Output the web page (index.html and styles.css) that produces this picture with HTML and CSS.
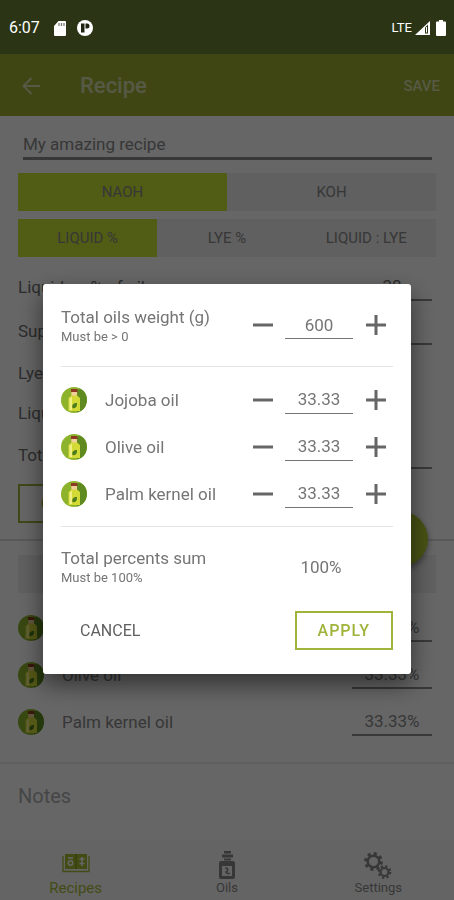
FILE: index.html
```html
<!DOCTYPE html>
<html lang="en">
<head>
<meta charset="utf-8">
<meta name="viewport" content="width=device-width, initial-scale=1">
<title>Recipe</title>
<link rel="stylesheet" href="styles.css">
</head>
<body>
<svg class="defs" aria-hidden="true">
  <symbol id="oil" viewBox="0 0 26 26">
    <circle cx="13" cy="13" r="13" fill="#8db32c"/>
    <path d="M16 3 19 1.500A13 13 0 0 1 16 25.600Z" fill="#5e8a20"/>
    <path d="M10.500 5h5.500v3.500l3 2.500v13H7.500V11l3-2.500z" fill="#d3d935"/>
    <path d="M10.500 5h5.500v3.500h-5.500z" fill="#f0cf9a"/>
    <path d="M10 2h6.500v3H10z" fill="#8c3a22"/>
    <path d="M8.500 11.500 11 9.500V23H8.500z" fill="#f1ee83"/>
    <path d="M11.500 21c-1-3.500 1-5 4.500-5 .3 3.500-1.500 6-4.500 5z" fill="#4d7c1c"/>
  </symbol>
  <symbol id="minus" viewBox="0 0 20 20"><path d="M0 10h20" stroke="#666" stroke-width="3"/></symbol>
  <symbol id="plus" viewBox="0 0 20 20"><path d="M0 10h20M10 0v20" stroke="#666" stroke-width="3"/></symbol>
</svg>

<header class="status">
  <span class="clock">6:07</span>
  <svg class="sd" width="12" height="15" viewBox="0 0 12 15"><path d="M4.500 0H11q1 0 1 1v13q0 1-1 1H1q-1 0-1-1V5z" fill="#fff"/><path d="M5 2v3M7.500 2v3M10 2v3" stroke="#777f6c" stroke-width="1.300"/></svg>
  <svg class="badge" width="16" height="16" viewBox="0 0 16 16"><circle cx="8" cy="8" r="8" fill="#fff"/><path d="M4 3.500h3.500v9H4z" fill="#1d2510"/><path d="M8.500 3.500h1.500a2.500 2.500 0 0 1 0 5H8.500z" fill="#1d2510"/></svg>
  <span class="lte">LTE</span>
  <svg width="15" height="14" viewBox="0 0 15 14"><path d="M15 0v14H0z" fill="#fff"/><path d="M10 6.500v6h3v-9z" fill="#2b3516"/><path d="M11.500 6v5.500" stroke="#fff" stroke-width="1"/></svg>
  <svg class="battery" width="10" height="16" viewBox="0 0 10 16"><path d="M3 0h4v1.500h2q1 0 1 1V15q0 1-1 1H1q-1 0-1-1V2.500q0-1 1-1h2z" fill="#fff"/></svg>
</header>

<div class="toolbar">
  <button class="back" aria-label="Back"><svg width="18" height="18" viewBox="0 0 18 18"><path d="M18 9H1.500M9.500 1 1.500 9l8 8" fill="none" stroke="currentColor" stroke-width="2"/></svg></button>
  <h1>Recipe</h1>
  <button class="save">SAVE</button>
</div>

<main>
  <section class="form">
    <input class="name" type="text" value="My amazing recipe" aria-label="Recipe name">
    <div class="toggle"><button class="on">NAOH</button><button>KOH</button></div>
    <div class="toggle"><button class="on">LIQUID %</button><button>LYE %</button><button>LIQUID : LYE</button></div>
    <div class="fields">
      <div class="field entry"><label for="liq">Liquid as % of oils</label><input id="liq" value="38"></div>
      <div class="field entry"><label for="fat">Superfat %</label><input id="fat" value="5"></div>
      <div class="field"><span>Lye</span><b>80.7</b></div>
      <div class="field"><span>Liquid</span><b>228</b></div>
      <div class="field entry"><label for="tot">Total</label><input id="tot" value="600"></div>
    </div>
    <button class="outline calc">CALCULATE</button>
    <button class="fab" aria-label="Add oil"></button>
  </section>

  <section class="oils">
    <button class="wide">OILS</button>
    <div class="oil"><svg class="bottle"><use href="#oil"/></svg><label for="b1">Jojoba oil</label><input id="b1" value="33.33%"></div>
    <div class="oil"><svg class="bottle"><use href="#oil"/></svg><label for="b2">Olive oil</label><input id="b2" value="33.33%"></div>
    <div class="oil"><svg class="bottle"><use href="#oil"/></svg><label for="b3">Palm kernel oil</label><input id="b3" value="33.33%"></div>
  </section>
  <section class="notes"><input type="text" placeholder="Notes" aria-label="Notes"></section>
</main>

<nav class="tabs">
  <a class="active" href="#recipes"><svg width="28" height="20" viewBox="0 0 28 20"><path d="M3 1h22v15H3z" fill="currentColor"/><path d="M1 3v15.500h26V3" fill="none" stroke="currentColor" stroke-width="1.300"/><path d="M14 1v15" stroke="#7e9422" stroke-width="1"/><g fill="none" stroke="#fff" stroke-width="1.500"><circle cx="8.500" cy="10" r="2.200"/><path d="M6 5h5M17.500 6h5M17.500 10.500h5M20 4v9"/></g></svg><span>Recipes</span></a>
  <a href="#oils"><svg width="18" height="28" viewBox="0 0 18 28"><path d="M6 0h7v2.500H6zM4 3.500h11v3H4zM6 7.500h7v2H6zM3 10h12q2 0 2 2v14q0 2-2 2H3q-2 0-2-2V12q0-2 2-2z" fill="currentColor"/><path d="M4 15h10v10H4z" fill="#fafafa"/><path d="M7 17c4 0 3 3 1.500 3.500S9 23 12 22.500" fill="none" stroke="currentColor" stroke-width="1.500"/></svg><span>Oils</span></a>
  <a href="#settings"><svg width="28" height="27" viewBox="0 0 28 27"><g fill="none" stroke="currentColor"><circle cx="9.500" cy="9.500" r="5.800" stroke-width="2.500"/><circle cx="9.500" cy="9.500" r="8" stroke-width="2.800" stroke-dasharray="3.140 3.140"/><circle cx="20.500" cy="20" r="4" stroke-width="2.200"/><circle cx="20.500" cy="20" r="5.800" stroke-width="2.200" stroke-dasharray="2.280 2.280"/></g></svg><span>Settings</span></a>
</nav>

<div class="scrim">
  <div class="dialog" role="dialog" aria-modal="true" aria-label="Oils weight">
    <div class="head row">
      <label for="w">Total oils weight (g)<small>Must be &gt; 0</small></label>
      <button aria-label="Less weight"><svg><use href="#minus"/></svg></button><input id="w" value="600"><button aria-label="More weight"><svg><use href="#plus"/></svg></button>
    </div>
    <div class="list">
      <div class="row"><svg class="bottle"><use href="#oil"/></svg><label for="d1">Jojoba oil</label><button aria-label="Less Jojoba oil"><svg><use href="#minus"/></svg></button><input id="d1" value="33.33"><button aria-label="More Jojoba oil"><svg><use href="#plus"/></svg></button></div>
      <div class="row"><svg class="bottle"><use href="#oil"/></svg><label for="d2">Olive oil</label><button aria-label="Less Olive oil"><svg><use href="#minus"/></svg></button><input id="d2" value="33.33"><button aria-label="More Olive oil"><svg><use href="#plus"/></svg></button></div>
      <div class="row"><svg class="bottle"><use href="#oil"/></svg><label for="d3">Palm kernel oil</label><button aria-label="Less Palm kernel oil"><svg><use href="#minus"/></svg></button><input id="d3" value="33.33"><button aria-label="More Palm kernel oil"><svg><use href="#plus"/></svg></button></div>
    </div>
    <div class="sum"><div>Total percents sum<small>Must be 100%</small></div><output>100%</output></div>
    <div class="actions"><button class="cancel">CANCEL</button><button class="outline">APPLY</button></div>
  </div>
</div>
</body>
</html>
```

FILE: styles.css
```css
* { box-sizing: border-box; }
body {
  margin: 0;
  min-height: 100vh;
  display: flex;
  flex-direction: column;
  background: #fff;
  color: #8a8a8a;
  font: 17px/20px Roboto, sans-serif;
}
button, input { font: inherit; color: inherit; border: 0; padding: 0; margin: 0; background: none; border-radius: 0; }
input { min-width: 0; outline: 0; }
a { color: inherit; text-decoration: none; }
svg { flex: none; display: block; }
.defs { position: absolute; width: 0; height: 0; }
.bottle { width: 26px; height: 26px; }

.status {
  position: relative;
  z-index: 3;
  height: 54px;
  padding: 2px 8px 0 9px;
  display: flex;
  align-items: center;
  background: #2b3516;
  color: #fff;
}
.clock { font-size: 16px; }
.sd { margin-left: 14px; }
.badge { margin-left: 11px; }
.lte { margin: 0 3px 0 auto; font-size: 13px; }
.battery { margin-left: 6px; }

.toolbar {
  height: 62px;
  padding: 2px 14px 0 22px;
  display: flex;
  align-items: center;
  background: #9eaf32;
  color: #fff9;
}
.toolbar h1 { flex: 1; margin: 0 0 0 40px; font-size: 22px; font-weight: 500; line-height: 28px; }
.save { font-size: 15px; font-weight: 500; }

main { flex: 1; }
.form { position: relative; padding: 14px 18px 16px; border-bottom: 2px solid #dcdcdc; }
.name { display: block; width: calc(100% - 9px); height: 30px; margin: 0 4px 13px 5px; border-bottom: 3px solid #8c8c8c; }
.toggle { display: flex; height: 38px; margin-bottom: 8px; background: #efefef; font-size: 15px; }
.toggle button { flex: 1; }
.toggle .on { background: #cae632; }
.fields { padding-right: 4px; }
.field { display: flex; justify-content: space-between; align-items: center; height: 40px; color: #707070; }
.field.entry { height: 44px; }
.field input { width: 80px; height: 28px; text-align: center; border-bottom: 2px solid #8c8c8c; }
.field b { width: 80px; text-align: center; }
.outline { height: 39px; padding: 0 21px; border: 2px solid #a0b43c; color: #a0b43c; font-size: 16px; font-weight: 500; letter-spacing: 1px; }
.calc { display: block; margin-top: 7px; }
.fab { position: absolute; right: 26px; bottom: -28px; width: 56px; height: 56px; border-radius: 50%; background: #b4cc32; box-shadow: 0 3px 6px #0006; }

.oils { padding: 14px 18px 17px; border-bottom: 2px solid #eee; }
.wide { display: block; width: 100%; height: 38px; margin-bottom: 11px; background: #efefef; }
.oil { display: flex; align-items: center; height: 47px; padding-right: 4px; }
.oil label { flex: 1; margin-left: 18px; }
.oil input { width: 80px; height: 28px; text-align: center; border-bottom: 2px solid #8c8c8c; }
.notes { padding: 20px 18px; }
.notes input { display: block; width: 100%; height: 24px; font-size: 20px; }
.notes input::placeholder { color: #b0b0b0; opacity: 1; }

.tabs { display: flex; height: 60px; background: #fafafa; font-size: 13px; line-height: 16px; }
.tabs a { flex: 1; display: flex; flex-direction: column; align-items: center; justify-content: flex-end; gap: 1px; padding-bottom: 4px; }
.tabs .active { gap: 7px; font-size: 15px; color: #a5bd32; }

.scrim {
  position: fixed;
  inset: 0;
  z-index: 2;
  padding: 58px 43px 0;
  display: flex;
  align-items: center;
  justify-content: center;
  background: #0009;
}
.dialog { width: 100%; max-width: 560px; padding: 0 18px 24px; border-radius: 3px; background: #fff; color: #757575; box-shadow: 0 10px 24px #0008; }
.row { display: flex; align-items: center; height: 47px; }
.row label { flex: 1; white-space: nowrap; }
.row .bottle + label { margin-left: 18px; }
.row button, .row button svg { width: 20px; height: 20px; }
.row button:last-child { margin-right: 7px; }
.row input { width: 68px; height: 28px; margin: 0 13px 0 12px; text-align: center; border-bottom: 1px solid #757575; }
.row.head { height: 83px; border-bottom: 1px solid #e4e4e4; }
.head label { padding-top: 4px; }
small { display: block; font-size: 13px; line-height: 20px; }
.list { padding: 9px 0; border-bottom: 1px solid #e4e4e4; }
.sum { display: flex; align-items: center; height: 84px; padding-bottom: 3px; }
.sum div { flex: 1; }
.sum output { width: 68px; margin-right: 38px; padding-bottom: 2px; text-align: center; }
.actions { display: flex; justify-content: space-between; align-items: center; }
.cancel { margin-left: 19px; font-size: 16px; color: #606060; }
```
